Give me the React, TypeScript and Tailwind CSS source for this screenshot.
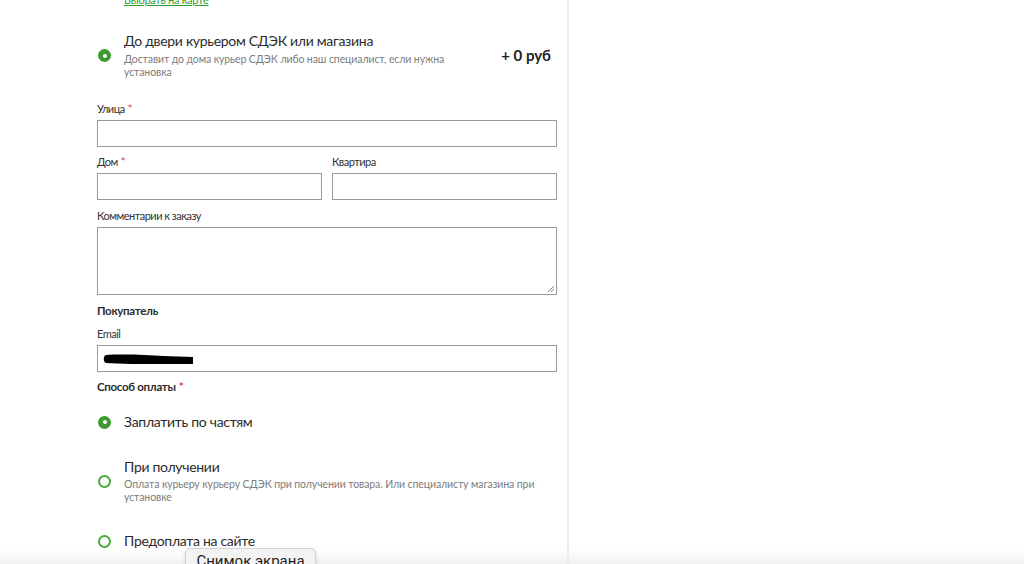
const FONT = "font-['Lato',_'Noto_Sans',_sans-serif]"

function Radio({ checked }: { checked?: boolean }) {
  if (checked) {
    return (
      <span className="flex h-[13px] w-[13px] shrink-0 items-center justify-center rounded-full bg-[#3c9b2e]">
        <span className="block h-[4px] w-[4px] rounded-full bg-white" />
      </span>
    )
  }
  return <span className="block h-[13px] w-[13px] shrink-0 rounded-full border-2 border-[#4aa83d] bg-white" />
}

function Label({ text, required }: { text: string; required?: boolean }) {
  return (
    <div className="mb-[4px] h-[14px] text-[11px] leading-[14px] tracking-[-0.5px] text-[#333]">
      {text}
      {required && <span className="ml-[3px] text-[#e53935]">*</span>}
    </div>
  )
}

function Field() {
  return <div className="h-[27px] border border-[#9a9a9a] bg-white" />
}

function Option({
  title,
  note,
  checked,
}: {
  title: string
  note?: string
  checked?: boolean
}) {
  return (
    <div className="flex items-center">
      <div className="w-[27px] pl-[1px]">
        <Radio checked={checked} />
      </div>
      <div className="w-[425px]">
        <div className="text-[14px] leading-[18px] tracking-[-0.3px] text-[#2b2b2b]">{title}</div>
        {note && (
          <div className="mt-[2px] text-[10.5px] leading-[13px] tracking-[-0.1px] text-[#7d7d7d]">{note}</div>
        )}
      </div>
    </div>
  )
}

export default function App() {
  return (
    <div className={`relative h-[564px] w-[1024px] overflow-hidden bg-white ${FONT}`}>
      <div className="flex h-full">
        <div className="w-[569px] shrink-0 border-r-2 border-[#ececec] pl-[97px] pr-[10px]">
          <div className="w-[460px]">
            {/* map picker link, scrolled mostly out of view */}
            <div className="-mt-[7px] pl-[27px] text-[11px] leading-[14px] tracking-[-0.3px] text-[#2f9e2f] underline">
              Выбрать на карте
            </div>

            <div className="mt-[25px] flex items-center justify-between">
              <div className="flex items-center">
                <div className="w-[27px] pl-[1px]">
                  <Radio checked />
                </div>
                <div className="w-[335px]">
                  <div className="text-[14px] leading-[18px] tracking-[-0.3px] text-[#2b2b2b]">
                    До двери курьером СДЭК или магазина
                  </div>
                  <div className="mt-[3px] text-[10.5px] leading-[13px] tracking-[-0.1px] text-[#7d7d7d]">
                    Доставит до дома курьер СДЭК либо наш специалист, если нужна установка
                  </div>
                </div>
              </div>
              <div className="pr-[6px] text-[15px] font-bold text-[#222]">+ 0 руб</div>
            </div>

            <div className="mt-[23px]">
              <Label text="Улица" required />
              <Field />
            </div>

            <div className="mt-[8px] flex gap-[10px]">
              <div className="flex-1">
                <Label text="Дом" required />
                <Field />
              </div>
              <div className="flex-1">
                <Label text="Квартира" />
                <Field />
              </div>
            </div>

            <div className="mt-[9px]">
              <Label text="Комментарии к заказу" />
              <div className="relative h-[68px] border border-[#9a9a9a] bg-white">
                <svg className="absolute bottom-[1px] right-[1px]" width="8" height="8" viewBox="0 0 8 8">
                  <path d="M7 1L1 7M7 4L4 7" stroke="#8a8a8a" strokeWidth="1" />
                </svg>
              </div>
            </div>

            <div className="mt-[8px] h-[16px] text-[11.5px] font-bold leading-[16px] tracking-[-0.3px] text-[#2b2b2b]">
              Покупатель
            </div>

            <div className="mt-[8px]">
              <Label text="Email" />
              <div className="flex h-[27px] items-center border border-[#9a9a9a] bg-white pl-[5px]">
                <svg width="90" height="12" viewBox="0 0 90 12">
                  <path
                    d="M3 2 C20 1 45 2 60 3 L92 4 L92 11 L60 11 C40 11 15 11 3 10 C0 9 0 3 3 2 Z"
                    fill="#000"
                  />
                </svg>
              </div>
            </div>

            <div className="mt-[7px] h-[16px] text-[11.5px] font-bold leading-[16px] tracking-[-0.3px] text-[#2b2b2b]">
              Способ оплаты<span className="ml-[3px] text-[#e53935]">*</span>
            </div>

            <div className="mt-[18px]">
              <Option title="Заплатить по частям" checked />
            </div>
            <div className="mt-[27px]">
              <Option
                title="При получении"
                note="Оплата курьеру курьеру СДЭК при получении товара. Или специалисту магазина при установке"
              />
            </div>
            <div className="mt-[28px]">
              <Option title="Предоплата на сайте" />
            </div>
          </div>
        </div>
        <div className="flex-1" />
      </div>

      {/* system tooltip and bottom shade sitting over the page */}
      <div className="pointer-events-none absolute bottom-0 left-0 right-0 h-[14px] bg-gradient-to-b from-transparent to-[#ececec]/80" />
      <div className="absolute left-[185px] top-[548px] h-[30px] w-[131px] rounded-[5px] border border-[#d4d4d4] bg-[#f3f3f3] pt-[2px] text-center text-[15px] leading-[20px] text-[#1e1e1e] shadow-[0_1px_3px_rgba(0,0,0,0.15)] font-['Roboto',_sans-serif]">
        Снимок экрана
      </div>
    </div>
  )
}
